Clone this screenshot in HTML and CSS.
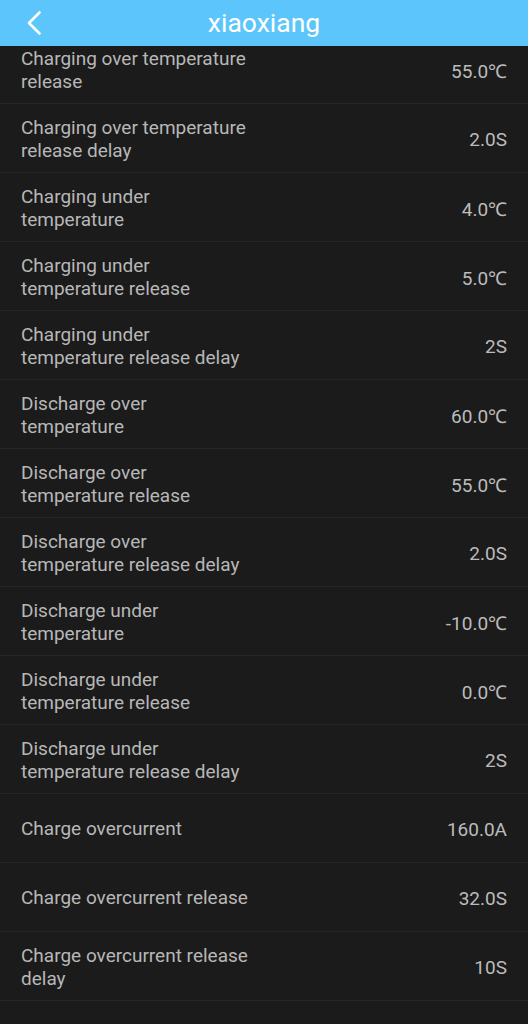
FILE: index.html
```html
<!DOCTYPE html>
<html lang="en">
<head>
<meta charset="utf-8">
<title>xiaoxiang</title>
<link rel="stylesheet" href="styles.css">
</head>
<body>
<header class="topbar">
  <svg class="back" width="20" height="26" viewBox="0 0 20 26" aria-hidden="true">
    <path d="M15.5 2.5 L5 13 L15.5 23.5" fill="none" stroke="#ffffff" stroke-width="2.6" stroke-linecap="round" stroke-linejoin="round"/>
  </svg>
  <h1 class="title">xiaoxiang</h1>
</header>
<main class="list">
  <div class="row"><span class="label">Charging over temperature release</span><span class="value">55.0℃</span></div>
  <div class="row"><span class="label">Charging over temperature release delay</span><span class="value">2.0S</span></div>
  <div class="row"><span class="label">Charging under temperature</span><span class="value">4.0℃</span></div>
  <div class="row"><span class="label">Charging under temperature release</span><span class="value">5.0℃</span></div>
  <div class="row"><span class="label">Charging under temperature release delay</span><span class="value">2S</span></div>
  <div class="row"><span class="label">Discharge over temperature</span><span class="value">60.0℃</span></div>
  <div class="row"><span class="label">Discharge over temperature release</span><span class="value">55.0℃</span></div>
  <div class="row"><span class="label">Discharge over temperature release delay</span><span class="value">2.0S</span></div>
  <div class="row"><span class="label">Discharge under temperature</span><span class="value">-10.0℃</span></div>
  <div class="row"><span class="label">Discharge under temperature release</span><span class="value">0.0℃</span></div>
  <div class="row"><span class="label">Discharge under temperature release delay</span><span class="value">2S</span></div>
  <div class="row"><span class="label">Charge overcurrent</span><span class="value">160.0A</span></div>
  <div class="row"><span class="label">Charge overcurrent release</span><span class="value">32.0S</span></div>
  <div class="row"><span class="label">Charge overcurrent release delay</span><span class="value">10S</span></div>
</main>
</body>
</html>
```
FILE: styles.css
```css
html, body {
  margin: 0;
  padding: 0;
  background: #1b1b1b;
}
body {
  font-family: Roboto, "Noto Sans", "DejaVu Sans", sans-serif;
  height: 1024px;
  overflow: hidden;
}
.topbar {
  position: fixed;
  top: 0;
  left: 0;
  right: 0;
  height: 46px;
  background: #5cc5fc;
  display: flex;
  align-items: center;
  justify-content: center;
  z-index: 2;
}
.back {
  position: absolute;
  left: 24px;
  top: 10px;
}
.title {
  margin: 0;
  font-size: 26.5px;
  font-weight: 400;
  color: #ffffff;
  line-height: 46px;
}
.list {
  padding-top: 35px;
}
.row {
  box-sizing: border-box;
  height: 69px;
  border-bottom: 1px solid #272727;
  display: flex;
  align-items: center;
  justify-content: space-between;
  padding: 3px 21px 0 21px;
}
.label {
  width: 230px;
  font-size: 19px;
  line-height: 22.5px;
  color: #b7b7b7;
}
.value {
  font-size: 19px;
  color: #bbbbbb;
}
```
